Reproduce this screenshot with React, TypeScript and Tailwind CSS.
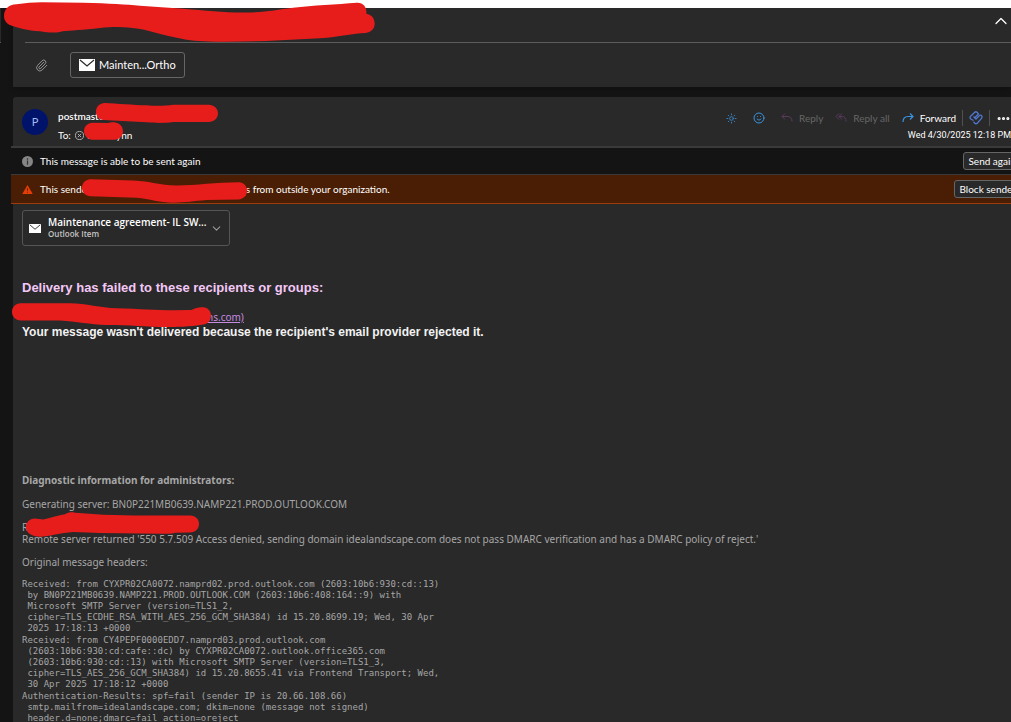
import React from 'react';
import { ChevronDown, ChevronUp, Ellipsis, Paperclip, Smile, Sun } from 'lucide-react';

const headerLines = [
  {
    id: 'received-1',
    text: `Received: from CYXPR02CA0072.namprd02.prod.outlook.com (2603:10b6:930:cd::13)
 by BN0P221MB0639.NAMP221.PROD.OUTLOOK.COM (2603:10b6:408:164::9) with
 Microsoft SMTP Server (version=TLS1_2,
 cipher=TLS_ECDHE_RSA_WITH_AES_256_GCM_SHA384) id 15.20.8699.19; Wed, 30 Apr
 2025 17:18:13 +0000`,
  },
  {
    id: 'received-2',
    text: `Received: from CY4PEPF0000EDD7.namprd03.prod.outlook.com
 (2603:10b6:930:cd:cafe::dc) by CYXPR02CA0072.outlook.office365.com
 (2603:10b6:930:cd::13) with Microsoft SMTP Server (version=TLS1_3,
 cipher=TLS_AES_256_GCM_SHA384) id 15.20.8655.41 via Frontend Transport; Wed,
 30 Apr 2025 17:18:12 +0000`,
  },
  {
    id: 'auth-results',
    text: `Authentication-Results: spf=fail (sender IP is 20.66.108.66)
 smtp.mailfrom=idealandscape.com; dkim=none (message not signed)
 header.d=none;dmarc=fail action=oreject`,
  },
];

// Red marker strokes, drawn at three units per pixel
const strokes = {
  subject: {
    viewBox: '12 5 1114 119',
    d: 'M12 47C12 28 25 12 50 12C75 8 100 6 125 6L250 7C330 9 380 12 420 16L550 25C620 31 680 37 740 36C800 36 830 28 880 22C940 15 1010 12 1072 7C1092 6 1102 22 1100 40C1116 42 1125 55 1125 69C1125 85 1114 95 1098 97C1060 98 1020 108 960 113L800 121L680 123C630 123 590 121 560 117C500 107 470 96 430 87C390 79 350 77 300 82C250 88 210 89 188 92C170 99 140 95 120 92C80 90 60 82 40 77C22 73 12 62 12 47Z',
  },
  sender: {
    viewBox: '288 54 366 60',
    d: 'M314 54C350 56 400 60 440 61C470 64 500 62 520 59L626 59C642 59 654 70 654 85C654 100 642 111 626 111L520 111C490 115 470 114 440 112L310 105C297 103 288 94 288 80C288 65 299 54 314 54Z',
  },
  recipient: {
    viewBox: '252 112 118 54',
    d: 'M278 114L325 115C338 110 370 112 370 140C370 154 360 165 344 165L278 165C263 165 252 153 252 139C252 125 263 114 278 114Z',
  },
  banner: {
    viewBox: '246 284 496 74',
    d: 'M272 285L400 289C450 291 480 304 530 304C590 304 650 294 718 294C732 294 742 306 742 320C742 336 732 345 716 347L620 349C580 352 560 357 520 357C480 357 450 346 410 342L272 337C257 337 246 326 246 311C246 297 257 285 272 285Z',
  },
  address: {
    viewBox: '36 128 598 73',
    d: 'M62 129L210 129C260 130 300 143 350 144C420 146 470 150 520 150L575 149C590 142 600 141 610 141C625 142 634 153 634 166C634 184 622 193 606 194C570 200 530 201 500 201C440 201 390 195 320 195C270 193 230 184 180 181L62 181C47 181 36 169 36 155C36 141 47 129 62 129Z',
  },
  diagnostic: {
    viewBox: '78 155 518 76',
    d: 'M104 175L130 178C155 172 175 165 195 162C205 155 215 155 225 157L310 163L400 166L570 166C585 166 596 177 596 191C596 207 585 217 570 217L525 218C515 222 500 221 480 221L300 219L220 216C180 218 150 230 120 230C95 229 78 218 78 201C78 186 89 175 104 175Z',
  },
};

function Redaction({ name, className }: { name: keyof typeof strokes; className: string }) {
  return (
    <svg
      viewBox={strokes[name].viewBox}
      preserveAspectRatio="none"
      aria-hidden="true"
      className={`absolute z-10 ${className}`}
    >
      <path d={strokes[name].d} fill="#e71d1c" />
    </svg>
  );
}

function MailIcon({ className }: { className: string }) {
  return (
    <svg viewBox="0 0 16 12" preserveAspectRatio="none" className={className} aria-hidden="true">
      <rect width="16" height="12" fill="#fff" />
      <path d="M1 1l7 6 7-6" fill="none" stroke="#292929" strokeWidth="1.2" />
    </svg>
  );
}

function ReplyIcon({ all = false }: { all?: boolean }) {
  return (
    <svg viewBox="0 0 12 12" className="h-3 w-3" fill="none" stroke="#5a3a5e" aria-hidden="true">
      <path d="M4 1.5L1 4.5l3 3" />
      {all ? (
        <path d="M7 1.5L4 4.5l3 3M4 4.5h3.5c2 0 3.5 2 3.5 5" />
      ) : (
        <path d="M1 4.5h6c2.5 0 4 2 4 5" />
      )}
    </svg>
  );
}

function ForwardIcon() {
  return (
    <svg viewBox="0 0 12 12" className="h-3 w-3" fill="none" stroke="#3b94e0" strokeWidth="1.2" aria-hidden="true">
      <path d="M8 1.5l3 3-3 3M11 4.5H6c-3 0-5 2-5 5.5" />
    </svg>
  );
}

function LoopIcon() {
  return (
    <svg viewBox="0 0 14 14" className="h-3.5 w-3.5" fill="none" stroke="#4f78d0" strokeWidth="1.3" aria-hidden="true">
      <path d="M4.5 9.5L1.8 8a2 2 0 0 1-.2-2.8L5.5 1.5a2 2 0 0 1 2.8 0L9.5 3 5.5 7" />
      <path d="M4.5 5.5L7 8l3.2-3.3a1.5 1.5 0 0 1 2.3 0 2 2 0 0 1 0 2.6L8.2 12.2a1.7 1.7 0 0 1-2.4 0L4.5 10.8" />
    </svg>
  );
}

export default function App() {
  return (
    <div className="flex h-screen flex-col overflow-hidden bg-white pt-2 font-[Lato,'Open_Sans',sans-serif] text-[10px] leading-[14px] text-white">
      <div className="flex min-h-0 flex-1 bg-[#141414]">
        {/* Edge of the message list */}
        <div className="w-[13px] shrink-0">
          <div className="h-[35px] w-px border-b border-[#555] bg-[#292929]" />
        </div>

        <main className="flex min-w-0 flex-1 flex-col gap-2.5">
          {/* Subject */}
          <header className="relative bg-[#292929] pl-3 shadow-md">
            <Redaction name="subject" className="-left-[9px] -top-[6px] h-10 w-[371px]" />
            <div className="flex h-[35px] items-center justify-end border-b border-[#5c5c5c] pb-2">
              <button type="button" aria-label="Collapse">
                <ChevronUp size={20} strokeWidth={1.5} />
              </button>
            </div>
            <div className="flex h-11 items-center gap-[22px] pl-[10px]">
              <Paperclip size={13} strokeWidth={1.5} className="text-[#aaa]" />
              <button
                type="button"
                className="flex h-[26px] items-center gap-1 rounded-[3px] border border-[#666] px-2 text-[11px]"
              >
                <MailIcon className="h-3 w-4" />
                Mainten...Ortho
              </button>
            </div>
          </header>

          <article className="min-h-0 flex-1 rounded-tl-[3px] bg-[#292929]">
            {/* Sender and actions */}
            <div className="flex h-[49px] items-start justify-between pl-[9px]">
              <div className="relative flex gap-2.5 pt-3">
                <span className="flex h-[26px] w-[26px] items-center justify-center rounded-full bg-[#00136b] text-[11px] text-[#a9b8ee]">
                  P
                </span>
                <div>
                  <p className="font-semibold">postmaster</p>
                  <p className="flex items-center gap-1 pt-[5px]">
                    To:
                    <svg viewBox="0 0 10 10" className="h-[9px] w-[9px]" fill="none" stroke="#bbb" aria-hidden="true">
                      <circle cx="5" cy="5" r="4.5" />
                      <path d="M3.2 3.2l3.6 3.6M6.8 3.2L3.2 6.8" />
                    </svg>
                    <span>J</span>
                    <span className="pl-5">ynn</span>
                  </p>
                </div>
                <Redaction name="sender" className="left-[74px] top-[6px] h-5 w-[122px]" />
                <Redaction name="recipient" className="left-[62px] top-[25px] h-[18px] w-[39px]" />
              </div>
              <div className="pt-3">
                <div className="flex h-[18px] items-center justify-end text-[#666]">
                  <button type="button" aria-label="Light mode" className="mr-4 text-[#3b86c6]">
                    <Sun size={11} strokeWidth={2} />
                  </button>
                  <button type="button" aria-label="React" className="mr-4 text-[#3b94e0]">
                    <Smile size={12} strokeWidth={2} />
                  </button>
                  <button type="button" disabled className="mr-3 flex items-center gap-1.5">
                    <ReplyIcon />
                    Reply
                  </button>
                  <button type="button" disabled className="mr-3 flex items-center gap-1.5">
                    <ReplyIcon all />
                    Reply all
                  </button>
                  <button type="button" className="flex items-center gap-1.5 text-white">
                    <ForwardIcon />
                    Forward
                  </button>
                  <span className="mx-1.5 h-4 w-px bg-[#505050]" />
                  <button type="button" aria-label="Share to Loop">
                    <LoopIcon />
                  </button>
                  <span className="mx-1.5 h-4 w-px bg-[#505050]" />
                  <button type="button" aria-label="More actions" className="text-white">
                    <Ellipsis size={15} strokeWidth={3} />
                  </button>
                </div>
                <p className="pt-px text-right font-[Roboto,sans-serif] text-[9px]">Wed 4/30/2025 12:18 PM</p>
              </div>
            </div>

            {/* Notices */}
            <div className="-ml-0.5 flex h-[28px] items-center border-t-2 border-[#3a3a3a] bg-[#141414] pl-[11px]">
              <svg viewBox="0 0 12 12" className="mr-[7px] h-[11px] w-[11px]" aria-hidden="true">
                <circle cx="6" cy="6" r="6" fill="#858585" />
                <path d="M6 2.5v1.5M6 5v4.5" stroke="#333" strokeWidth="1.3" />
              </svg>
              <p>This message is able to be sent again</p>
              <button
                type="button"
                className="-mr-2.5 ml-auto h-[18px] rounded-[3px] border border-[#666] bg-[#292929] px-1 leading-[16px]"
              >
                Send again
              </button>
            </div>
            <div className="relative -ml-0.5 flex h-[30px] items-center border-b border-t border-b-[#9c3b0c] border-t-[#3a3a3a] bg-[#4a1e04] pl-[11px]">
              <svg viewBox="0 0 12 11" className="mr-[7px] h-[11px] w-[11px]" aria-hidden="true">
                <path d="M6 .5L11.7 10.5H.3z" fill="#e43e06" />
                <path d="M6 4v3M6 8v1" stroke="#6b2205" />
              </svg>
              <p>This sende</p>
              <p className="pl-[159px]">s from outside your organization.</p>
              <button
                type="button"
                className="-mr-2.5 ml-auto h-[18px] rounded-[3px] border border-[#666] bg-[#292929] px-1 leading-[16px]"
              >
                Block sender
              </button>
              <Redaction name="banner" className="left-[71px] top-[4px] h-6 w-[165px]" />
            </div>

            {/* Attachment */}
            <button
              type="button"
              className="ml-[9px] mt-[6px] flex h-9 w-[208px] items-center rounded-[3px] border border-[#555] px-[6px] text-left"
            >
              <MailIcon className="h-[9px] w-3" />
              <span className="ml-[7px] flex-1 font-['Open_Sans',sans-serif] font-semibold leading-[12px]">
                <span className="block">Maintenance agreement- IL SW...</span>
                <span className="block text-[8px] text-[#c4c4c4]">Outlook Item</span>
              </span>
              <ChevronDown size={13} strokeWidth={2} className="text-[#999]" />
            </button>

            {/* Body */}
            <div className="relative pl-[9px] pt-8 font-['Noto_Sans',sans-serif]">
              <h1 className="font-['Liberation_Sans',sans-serif] text-[13px] font-bold leading-5 text-[#f3c8f7]">
                Delivery has failed to these recipients or groups:
              </h1>
              <p className="pl-[185px] pt-3 text-[#c58be0]">
                <a href="#recipient" className="underline">
                  ns.com)
                </a>
              </p>
              <p className="font-['Liberation_Sans',sans-serif] text-[12px] font-bold leading-4 text-[#f2f2f2]">
                Your message wasn't delivered because the recipient's email provider rejected it.
              </p>
              <Redaction name="address" className="-left-px top-[57px] h-6 w-[199px]" />

              <section className="relative flex flex-col gap-2.5 pt-[133px] text-[#a6a6a6]">
                <h2 className="font-bold">Diagnostic information for administrators:</h2>
                <p>Generating server: BN0P221MB0639.NAMP221.PROD.OUTLOOK.COM</p>
                <p className="leading-[12px]">
                  R
                  <br />
                  Remote server returned '550 5.7.509 Access denied, sending domain idealandscape.com does not pass
                  DMARC verification and has a DMARC policy of reject.'
                </p>
                <p>Original message headers:</p>
                <div className="flex flex-col gap-px text-[9px] leading-[11px]">
                  {headerLines.map((header) => (
                    <pre key={header.id} className="font-['DejaVu_Sans_Mono',monospace]">
                      {header.text}
                    </pre>
                  ))}
                </div>
                <Redaction name="diagnostic" className="left-1 top-[172px] h-[25px] w-[173px]" />
              </section>
            </div>
          </article>
        </main>
      </div>
    </div>
  );
}
